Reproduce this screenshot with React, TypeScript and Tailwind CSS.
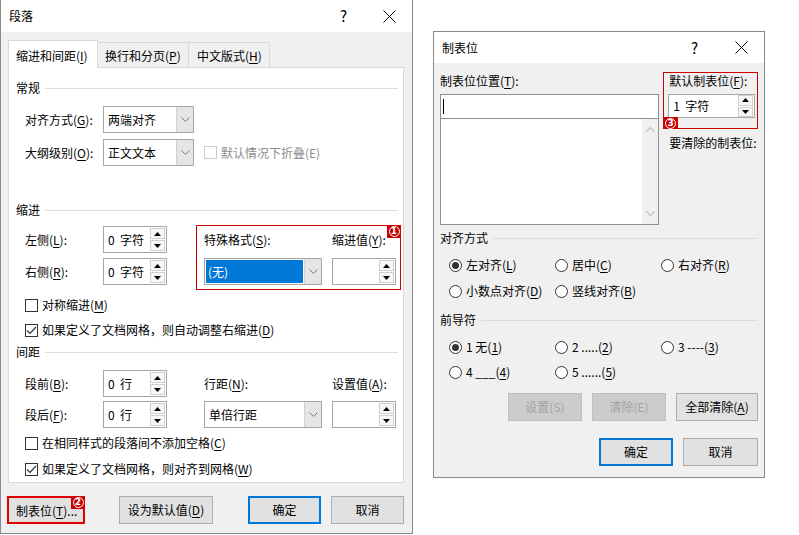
import React from "react";

const U = ({ children }: { children: React.ReactNode }) => (
  <span className="underline underline-offset-[2px] decoration-[1px]">{children}</span>
);

function Chevron() {
  return (
    <svg width="9" height="5" viewBox="0 0 9 5">
      <polyline points="0.5,0.5 4.5,4.5 8.5,0.5" fill="none" stroke="#7a7a7a" strokeWidth="1" />
    </svg>
  );
}

function CloseX() {
  return (
    <svg width="13" height="13" viewBox="0 0 13 13">
      <line x1="0.5" y1="0.5" x2="12.5" y2="12.5" stroke="#000" strokeWidth="1" />
      <line x1="12.5" y1="0.5" x2="0.5" y2="12.5" stroke="#000" strokeWidth="1" />
    </svg>
  );
}

function Tri({ up }: { up?: boolean }) {
  return (
    <svg width="7" height="4" viewBox="0 0 7 4">
      {up ? <polygon points="0,4 7,4 3.5,0" fill="#000" /> : <polygon points="0,0 7,0 3.5,4" fill="#000" />}
    </svg>
  );
}

function Combo({ wCls, text, selected }: { wCls: string; text: string; selected?: boolean }) {
  return (
    <div className={"flex h-[27px] border border-[#a6a6a6] bg-white " + wCls}>
      <div className="flex-1 flex items-center">
        {selected ? (
          <div className="ml-[1px] mr-[1px] h-[23px] flex-1 bg-[#0078d7] text-white flex items-center pl-[2px]">{text}</div>
        ) : (
          <span className="pl-[4px]">{text}</span>
        )}
      </div>
      <div className="w-[17px] bg-[#e5e5e5] border-l border-[#d0d0d0] flex items-center justify-center">
        <Chevron />
      </div>
    </div>
  );
}

function Spin({ wCls, hCls, text }: { wCls: string; hCls: string; text: string }) {
  return (
    <div className={"flex border border-[#a6a6a6] bg-white " + wCls + " " + hCls}>
      <div className="flex-1 flex items-center pl-[4px] whitespace-pre">{text}</div>
      <div className="flex flex-col justify-center gap-[1px] pr-[1px]">
        <div className="w-[15px] h-[11px] border border-[#cfcfcf] bg-[#f7f7f7] flex items-center justify-center">
          <Tri up />
        </div>
        <div className="w-[15px] h-[11px] border border-[#cfcfcf] bg-[#f7f7f7] flex items-center justify-center">
          <Tri />
        </div>
      </div>
    </div>
  );
}

function Check({ checked, disabled }: { checked?: boolean; disabled?: boolean }) {
  return (
    <span
      className={
        "w-[13px] h-[13px] border flex items-center justify-center bg-white shrink-0 " +
        (disabled ? "border-[#cccccc]" : "border-[#333333]")
      }
    >
      {checked && (
        <svg width="11" height="9" viewBox="0 0 11 9">
          <polyline points="1,4.5 4,7.5 10,1" stroke="#333" fill="none" strokeWidth="1.2" />
        </svg>
      )}
    </span>
  );
}

function Radio({ checked }: { checked?: boolean }) {
  return (
    <span className="w-[13px] h-[13px] rounded-full border border-[#333333] bg-white flex items-center justify-center shrink-0">
      {checked && <span className="w-[7px] h-[7px] rounded-full bg-[#333333]" />}
    </span>
  );
}

function Btn({
  children,
  cls,
  primary,
  disabled,
}: {
  children: React.ReactNode;
  cls: string;
  primary?: boolean;
  disabled?: boolean;
}) {
  const base = "h-[28px] flex items-center justify-center shrink-0 ";
  const look = disabled
    ? "bg-[#cccccc] border border-[#bfbfbf] text-[#a3a3a3]"
    : primary
    ? "bg-[#e1e1e1] border-2 border-[#0078d7]"
    : "bg-[#e1e1e1] border border-[#adadad]";
  return <div className={base + look + " " + cls}>{children}</div>;
}

function Heading({ text, cls }: { text: string; cls: string }) {
  return (
    <div className={"flex items-center h-[16px] " + cls}>
      <span>{text}</span>
      <div className="flex-1 h-px bg-[#dcdcdc] ml-[5px]" />
    </div>
  );
}

function Badge({ n, cls }: { n: string; cls: string }) {
  return (
    <span className={"absolute bg-[#cc0000] flex items-center justify-center " + cls}>
      <span className="w-[11px] h-[11px] rounded-full border border-white text-white flex items-center justify-center text-[9px] leading-none font-['DejaVu_Sans',sans-serif] font-bold">
        {n}
      </span>
    </span>
  );
}

function ParagraphDialog() {
  return (
    <div className="w-[413px] h-[534px] flex flex-col border-x border-b border-[#8a8a8a] bg-[#f0f0f0] shrink-0">
      <div className="h-[32px] bg-white flex items-center shrink-0 pl-[8px]">
        <span>段落</span>
        <span className="ml-auto mr-[36px] text-[15px]">?</span>
        <span className="mr-[16px] flex">
          <CloseX />
        </span>
      </div>
      <div className="flex-1 flex flex-col px-[7px] pt-[8px]">
        <div className="flex items-end h-[27px] relative z-10">
          <div className="w-[90px] h-[28px] -mb-[1px] border border-b-0 border-[#d9d9d9] bg-white flex items-center pl-[7px] pt-[2px]">
            缩进和间距(<U>I</U>)
          </div>
          <div className="w-[91px] h-[25px] border-t border-r border-[#d9d9d9] bg-[#f0f0f0] flex items-center pl-[7px] pt-[2px]">
            换行和分页(<U>P</U>)
          </div>
          <div className="w-[81px] h-[25px] border-t border-r border-[#d9d9d9] bg-[#f0f0f0] flex items-center pl-[8px] pt-[2px]">
            中文版式(<U>H</U>)
          </div>
        </div>
        <div className="w-[396px] h-[416px] border border-[#d9d9d9] bg-white flex flex-col">
          <Heading text="常规" cls="mt-[12px] pl-[7px] pr-[5px]" />
          <div className="mt-[10px] h-[27px] flex items-center pl-[16px]">
            <span className="w-[78px]">
              对齐方式(<U>G</U>):
            </span>
            <Combo wCls="w-[91px]" text="两端对齐" />
          </div>
          <div className="mt-[6px] h-[27px] flex items-center pl-[16px]">
            <span className="w-[78px]">
              大纲级别(<U>O</U>):
            </span>
            <Combo wCls="w-[91px]" text="正文文本" />
            <span className="ml-[10px]">
              <Check disabled />
            </span>
            <span className="ml-[4px] text-[#8d8d8d]">默认情况下折叠(E)</span>
          </div>
          <Heading text="缩进" cls="mt-[36px] pl-[7px] pr-[5px]" />
          <div className="mt-[7px] h-[65px] flex">
            <div className="ml-[16px] w-[171px] flex flex-col pt-[1px] gap-[5px]">
              <div className="h-[27px] flex items-center">
                <span className="w-[78px]">
                  左侧(<U>L</U>):
                </span>
                <Spin wCls="w-[64px]" hCls="h-[27px]" text="0  字符" />
              </div>
              <div className="h-[27px] flex items-center">
                <span className="w-[78px]">
                  右侧(<U>R</U>):
                </span>
                <Spin wCls="w-[64px]" hCls="h-[27px]" text="0  字符" />
              </div>
            </div>
            <div className="relative w-[205px] h-[65px] border border-[#cc0000] flex flex-col pl-[7px]">
              <Badge n="1" cls="-top-px -right-px w-[14px] h-[13px]" />
              <div className="mt-[6px] h-[16px] flex items-center">
                <span className="w-[128px]">
                  特殊格式(<U>S</U>):
                </span>
                <span>
                  缩进值(<U>Y</U>):
                </span>
              </div>
              <div className="mt-[10px] flex items-center">
                <Combo wCls="w-[118px]" text="(无)" selected />
                <span className="ml-[10px]">
                  <Spin wCls="w-[64px]" hCls="h-[27px]" text="" />
                </span>
              </div>
            </div>
          </div>
          <div className="mt-[7px] h-[16px] flex items-center pl-[16px]">
            <Check />
            <span className="ml-[4px]">
              对称缩进(<U>M</U>)
            </span>
          </div>
          <div className="mt-[9px] h-[16px] flex items-center pl-[16px]">
            <Check checked />
            <span className="ml-[4px]">
              如果定义了文档网格，则自动调整右缩进(<U>D</U>)
            </span>
          </div>
          <Heading text="间距" cls="mt-[6px] pl-[7px] pr-[5px]" />
          <div className="mt-[10px] h-[27px] flex items-center pl-[16px]">
            <span className="w-[78px]">
              段前(<U>B</U>):
            </span>
            <Spin wCls="w-[64px]" hCls="h-[27px]" text="0  行" />
            <span className="ml-[37px] w-[128px]">
              行距(<U>N</U>):
            </span>
            <span>
              设置值(<U>A</U>):
            </span>
          </div>
          <div className="mt-[4px] h-[27px] flex items-center pl-[16px]">
            <span className="w-[78px]">
              段后(<U>F</U>):
            </span>
            <Spin wCls="w-[64px]" hCls="h-[27px]" text="0  行" />
            <span className="ml-[37px]">
              <Combo wCls="w-[118px]" text="单倍行距" />
            </span>
            <span className="ml-[10px]">
              <Spin wCls="w-[64px]" hCls="h-[27px]" text="" />
            </span>
          </div>
          <div className="mt-[7px] h-[16px] flex items-center pl-[16px]">
            <Check />
            <span className="ml-[4px]">
              在相同样式的段落间不添加空格(<U>C</U>)
            </span>
          </div>
          <div className="mt-[10px] h-[16px] flex items-center pl-[16px]">
            <Check checked />
            <span className="ml-[4px]">
              如果定义了文档网格，则对齐到网格(<U>W</U>)
            </span>
          </div>
        </div>
        <div className="mt-[13px] flex -ml-[1px]">
          <div className="relative">
            <div className="w-[78px] h-[28px] bg-[#e1e1e1] border-2 border-[#e00000] flex items-center pl-[7px] pt-[2px]">
              制表位(<U>T</U>)...
            </div>
            <Badge n="2" cls="top-0 right-0 w-[14px] h-[13px]" />
          </div>
          <Btn cls="w-[94px] ml-[34px]">
            设为默认值(<U>D</U>)
          </Btn>
          <Btn cls="w-[73px] ml-[35px]" primary>
            确定
          </Btn>
          <Btn cls="w-[73px] ml-[10px]">取消</Btn>
        </div>
      </div>
    </div>
  );
}

function TabsDialog() {
  return (
    <div className="ml-[20px] mt-[31px] w-[332px] h-[447px] border border-[#8a8a8a] bg-[#f0f0f0] flex flex-col shrink-0">
      <div className="h-[31px] bg-white flex items-center shrink-0 pl-[8px]">
        <span>制表位</span>
        <span className="ml-auto mr-[37px] text-[15px]">?</span>
        <span className="mr-[16px] flex">
          <CloseX />
        </span>
      </div>
      <div className="flex-1 flex flex-col px-[6px]">
        <div className="flex">
          <div className="w-[222px] flex flex-col">
            <div className="mt-[10px] h-[16px] flex items-center">
              制表位位置(<U>T</U>):
            </div>
            <div className="mt-[5px] h-[25px] border border-[#8f8f8f] bg-white flex items-center pl-[2px]">
              <span className="w-px h-[15px] bg-black" />
            </div>
            <div className="h-[106px] border border-t-0 border-[#8f8f8f] bg-white flex justify-end">
              <div className="w-[16px] bg-[#f0f0f0] flex flex-col items-center justify-between py-[8px]">
                <svg width="9" height="5" viewBox="0 0 9 5">
                  <polyline points="0.5,4.5 4.5,0.5 8.5,4.5" fill="none" stroke="#c2c2c2" strokeWidth="1.2" />
                </svg>
                <svg width="9" height="5" viewBox="0 0 9 5">
                  <polyline points="0.5,0.5 4.5,4.5 8.5,0.5" fill="none" stroke="#c2c2c2" strokeWidth="1.2" />
                </svg>
              </div>
            </div>
          </div>
          <div className="ml-[4px] w-[96px] flex flex-col">
            <div className="mt-[9px] relative h-[57px] border border-[#cc0000] flex flex-col">
              <div className="h-[16px] pl-[5px] flex items-center">
                默认制表位(<U>F</U>):
              </div>
              <div className="mt-[5px] ml-[4px]">
                <Spin wCls="w-[87px]" hCls="h-[24px]" text="1  字符" />
              </div>
              <Badge n="3" cls="-bottom-px -left-px w-[15px] h-[12px]" />
            </div>
            <div className="mt-[6px] h-[16px] pl-[6px] flex items-center">要清除的制表位:</div>
          </div>
        </div>
        <Heading text="对齐方式" cls="mt-[5px]" />
        <div className="mt-[11px] h-[16px] flex items-center pl-[9px]">
          <div className="w-[106px] flex items-center">
            <Radio checked />
            <span className="ml-[4px]">
              左对齐(<U>L</U>)
            </span>
          </div>
          <div className="w-[106px] flex items-center">
            <Radio />
            <span className="ml-[4px]">
              居中(<U>C</U>)
            </span>
          </div>
          <div className="flex items-center">
            <Radio />
            <span className="ml-[4px]">
              右对齐(<U>R</U>)
            </span>
          </div>
        </div>
        <div className="mt-[10px] h-[16px] flex items-center pl-[9px]">
          <div className="w-[106px] flex items-center">
            <Radio />
            <span className="ml-[4px]">
              小数点对齐(<U>D</U>)
            </span>
          </div>
          <div className="flex items-center">
            <Radio />
            <span className="ml-[4px]">
              竖线对齐(<U>B</U>)
            </span>
          </div>
        </div>
        <Heading text="前导符" cls="mt-[13px]" />
        <div className="mt-[11px] h-[16px] flex items-center pl-[9px]">
          <div className="w-[106px] flex items-center">
            <Radio checked />
            <span className="ml-[4px]">
              1 无(<U>1</U>)
            </span>
          </div>
          <div className="w-[106px] flex items-center">
            <Radio />
            <span className="ml-[4px]">
              2 .....(<U>2</U>)
            </span>
          </div>
          <div className="flex items-center">
            <Radio />
            <span className="ml-[4px]">
              3 ----(<U>3</U>)
            </span>
          </div>
        </div>
        <div className="mt-[9px] h-[16px] flex items-center pl-[9px]">
          <div className="w-[106px] flex items-center">
            <Radio />
            <span className="ml-[4px]">
              4 ___(<U>4</U>)
            </span>
          </div>
          <div className="flex items-center">
            <Radio />
            <span className="ml-[4px]">
              5 ......(<U>5</U>)
            </span>
          </div>
        </div>
        <div className="mt-[13px] flex pl-[68px]">
          <Btn cls="w-[74px]" disabled>
            设置(S)
          </Btn>
          <Btn cls="w-[74px] ml-[10px]" disabled>
            清除(E)
          </Btn>
          <Btn cls="w-[82px] ml-[10px]">
            全部清除(<U>A</U>)
          </Btn>
        </div>
        <div className="mt-[17px] flex pl-[159px]">
          <Btn cls="w-[74px]" primary>
            确定
          </Btn>
          <Btn cls="w-[75px] ml-[10px]">取消</Btn>
        </div>
      </div>
    </div>
  );
}

export default function App() {
  return (
    <div className="w-[799px] h-[535px] bg-white flex items-start overflow-hidden text-[12px] leading-[16px] text-black font-['Microsoft_YaHei','Noto_Sans_CJK_SC','Noto_Sans',sans-serif]">
      <ParagraphDialog />
      <TabsDialog />
    </div>
  );
}
